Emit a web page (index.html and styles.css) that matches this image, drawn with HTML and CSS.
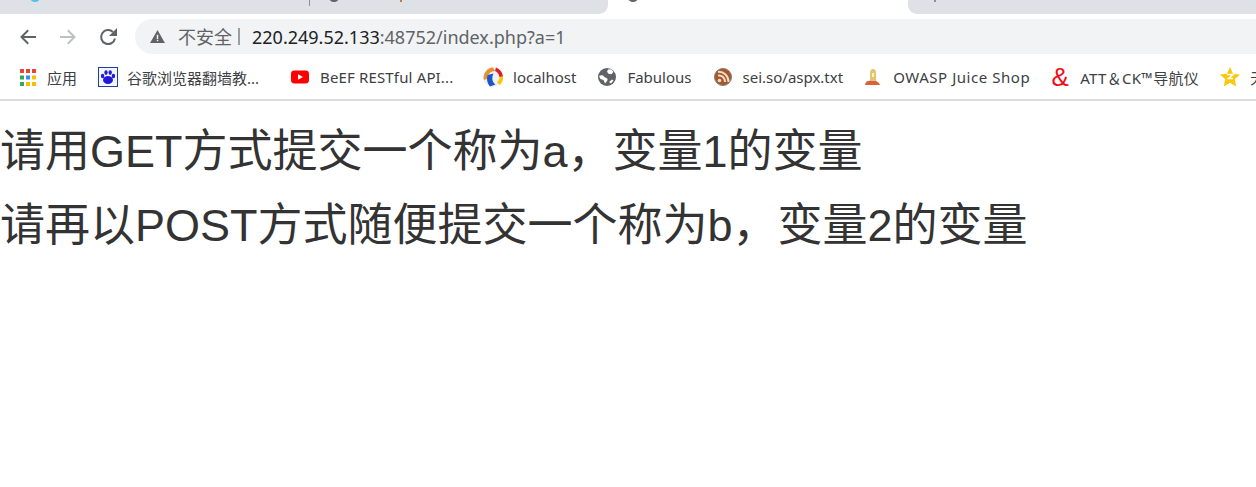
FILE: index.html
```html
<!DOCTYPE html>
<html lang="zh-CN">
<head>
<meta charset="utf-8">
<title>index.php</title>
<link rel="stylesheet" href="styles.css">
</head>
<body>
<header class="chrome">
  <div class="tabstrip">
    <div class="tab tab-before">
      <span class="peek peek-blue peek-a"></span>
      <span class="tab-sep sep-a"></span>
      <span class="peek peek-grey peek-b"></span>
      <span class="peek-bar bar-a"></span>
    </div>
    <div class="tab tab-active"><span class="peek peek-grey peek-c"></span></div>
    <div class="tab tab-after"><span class="peek-bar bar-b"></span></div>
  </div>
  <div class="toolbar">
    <div class="nav-buttons">
      <svg class="nav-icon" viewBox="0 0 18 18"><path d="M17 9H2.500M9.200 2.300 2.500 9l6.700 6.700" fill="none" stroke="#5f6368" stroke-width="2"/></svg>
      <svg class="nav-icon" viewBox="0 0 18 18"><path d="M1 9H15.500M8.800 2.300 15.500 9l-6.700 6.700" fill="none" stroke="#bdc1c6" stroke-width="2"/></svg>
      <svg class="nav-icon" viewBox="0 0 18 18"><path d="M16 10.500A7 7 0 1 1 14 4" fill="none" stroke="#5f6368" stroke-width="2"/><path d="M18 0v8h-8z" fill="#5f6368"/></svg>
    </div>
    <div class="omnibox">
      <svg class="warn" viewBox="0 0 16 14"><path d="M8 0 16 14H0z" fill="#5f6368"/><path d="M7.200 5h1.600v4.600H7.200zM7.200 10.600h1.600v1.600H7.200z" fill="#f1f3f4"/></svg>
      <span class="insecure">不安全</span>
      <span class="divider"></span>
      <span class="url"><span class="host">220.249.52.133</span>:48752/index.php?a=1</span>
    </div>
  </div>
  <nav class="bookmarks">
    <a class="bm"><svg class="bm-icon-apps" viewBox="0 0 16 17"><rect x="0" y="0" width="4" height="4" fill="#ea4335"/><rect x="6" y="0" width="4" height="4" fill="#ea4335"/><rect x="12" y="0" width="4" height="4" fill="#ea4335"/><rect x="0" y="6.500" width="4" height="4" fill="#34a853"/><rect x="6" y="6.500" width="4" height="4" fill="#4285f4"/><rect x="12" y="6.500" width="4" height="4" fill="#fbbc05"/><rect x="0" y="13" width="4" height="4" fill="#34a853"/><rect x="6" y="13" width="4" height="4" fill="#fbbc05"/><rect x="12" y="13" width="4" height="4" fill="#fbbc05"/></svg><span>应用</span></a>
    <a class="bm bm-long bm-baidu"><svg class="bm-icon-wide" viewBox="0 0 20 20"><rect x=".500" y=".500" width="19" height="19" fill="#f4f6ff" stroke="#1c3fae"/><g fill="#2319dc"><ellipse cx="10" cy="13" rx="5" ry="4"/><ellipse cx="4.600" cy="9" rx="1.700" ry="2.300"/><ellipse cx="8" cy="5.600" rx="1.700" ry="2.400"/><ellipse cx="12.200" cy="5.600" rx="1.700" ry="2.400"/><ellipse cx="15.400" cy="9" rx="1.700" ry="2.300"/></g></svg><span>谷歌浏览器翻墙教...</span></a>
    <a class="bm bm-yt"><svg class="bm-icon" viewBox="0 0 18 18"><rect x="0" y="2.500" width="18" height="13" rx="3.400" fill="#f00"/><path d="M7 6.200v5.600L12 9z" fill="#fff"/></svg><span class="track-beef">BeEF RESTful API...</span></a>
    <a class="bm bm-wide bm-pad"><svg class="bm-icon-wide" viewBox="0 0 20 20"><circle cx="10" cy="10" r="10" fill="#eef0f4"/><path d="M13 .500C17 2 19.500 5 20 9.500L16.500 10C16 7 14.500 5 12 4z" fill="#e01b24"/><path d="M16.500 10 20 9.500C20.300 13 19 16 16.500 18L14 15.500C15.600 14.300 16.500 12 16.500 10z" fill="#f6c800"/><path d="M12 4C8 4 4 7.500 3.800 12L1 13C-.5 7.500 3.500 1 10 .500z" fill="#e8912b"/><path d="M4.500 8C3.300 12 4.300 16.500 7 19.500L12.500 17.500C9 15 8.500 10.500 10.500 6.500z" fill="#1a56c4"/></svg><span>localhost</span></a>
    <a class="bm bm-pad"><svg class="bm-icon" viewBox="0 0 18 18"><circle cx="9" cy="9" r="9" fill="#5f6368"/><path d="M1 8c2-1 4-1 5 .500s3 1 3.500 2.500S8 14 7 15.500L5.500 12 2.500 11zM10 1.500l3-.200 2.500 2.500-2 2.500-3-.500-1.500-2z" fill="#fff"/><path d="M11 14l3-2.500 1.500 1-2.500 3z" fill="#fff"/></svg><span>Fabulous</span></a>
    <a class="bm"><svg class="bm-icon" viewBox="0 0 18 18"><circle cx="9" cy="9" r="8.500" fill="#a8562c"/><circle cx="9" cy="9" r="8.500" fill="none" stroke="#7d8078" stroke-width="1"/><path d="M4 7.500c4-.500 7 2.500 7 6.500M4 3.800C10 3.500 14.500 8 14.500 14" fill="none" stroke="#f1dcc8" stroke-width="2"/><circle cx="5.500" cy="12.500" r="1.800" fill="#f1dcc8"/></svg><span>sei.so/aspx.txt</span></a>
    <a class="bm"><svg class="bm-icon" viewBox="0 0 18 18"><path d="M6 5Q6 1 9 1t3 4v8H6z" fill="#e3c56e"/><rect x="8" y="5" width="2" height="4" fill="#fff3c4"/><path d="M1 17q1-5 6-4h5l3 2 1 2z" fill="#d9603a"/></svg><span class="track-owasp">OWASP Juice Shop</span></a>
    <a class="bm"><span class="amp-icon">&amp;</span><span class="track-att">ATT＆CK™导航仪</span></a>
    <a class="bm bm-wide"><svg class="bm-icon-wide" viewBox="0 0 20 20"><path d="M10 0l3 6.700 7 .800-5.200 4.700L16.200 19.500 10 15.800 3.800 19.500 5.200 12.200 0 7.500l7-.800z" fill="#fac80e"/><path d="M7 7.500h6L8.500 11.500H13" fill="none" stroke="#fff" stroke-width="1.500"/></svg><span>无</span></a>
  </nav>
</header>
<main class="page">
  <p class="line">请用GET方式提交一个称为a，变量1的变量</p>
  <p class="line">请再以POST方式随便提交一个称为b，变量2的变量</p>
</main>
</body>
</html>
```

FILE: styles.css
```css
* { box-sizing: border-box; }
html, body { margin: 0; padding: 0; height: 100%; overflow: hidden; background: #fff; }
body { font-family: "Liberation Sans", "Noto Sans CJK SC", sans-serif; color: #333; }

.chrome { border-bottom: 2px solid #dadce0; height: 101px; }

.tabstrip { display: flex; height: 14px; background: #fff; }
.tab { position: relative; height: 14px; overflow: hidden; }
.tab-before { width: 608px; background: #dee1e6; border-bottom-right-radius: 9px; }
.tab-active { width: 300px; background: #fff; }
.tab-after { flex: 1; background: #dee1e6; border-bottom-left-radius: 9px; }
.tab-sep { position: absolute; left: 309px; top: 0; width: 1px; height: 6px; background: #8d9094; }
.peek { position: absolute; top: -7px; width: 10px; height: 9px; border-radius: 50%; }
.peek-blue { background: #4fc3f0; }
.peek-grey { background: #5f6368; }
.peek-a { left: 30px; }
.peek-b { left: 329px; }
.peek-c { left: 20px; }
.peek-bar { position: absolute; top: 0; width: 2px; height: 2px; background: #c07a3a; }
.bar-a { left: 400px; }
.bar-b { left: 26px; background: #8d9094; }

.toolbar { display: flex; align-items: center; height: 45px; }
.nav-buttons { display: flex; align-items: center; gap: 22px; width: 135px; padding-left: 19px; flex-shrink: 0; }
.nav-icon { width: 18px; height: 18px; flex-shrink: 0; }
.omnibox {
  flex: 1; height: 35px; display: flex; align-items: center;
  background: #f1f3f4; border-radius: 18px 0 0 18px; padding-left: 15px;
  font-family: "Noto Sans", "Noto Sans CJK SC", sans-serif;
}
.warn { width: 15px; height: 13px; flex-shrink: 0; }
.insecure { margin-left: 13px; font-size: 18px; line-height: 24px; color: #5f6368; }
.divider { width: 2px; height: 17px; background: #9a9ea3; margin: 0 12px 0 6px; }
.url { font-size: 18px; line-height: 24px; color: #5f6368; white-space: nowrap; }
.host { color: #202124; }

.bookmarks {
  display: flex; align-items: center; height: 36px; padding-left: 20px; gap: 21px;
  font-family: "Noto Sans", "Noto Sans CJK SC", sans-serif; font-size: 15px; color: #3c4043;
  white-space: nowrap; overflow: hidden;
}
.bm { display: flex; align-items: center; gap: 11px; flex-shrink: 0; }
.bm-long { width: 171px; }
.bm-baidu { gap: 9px; }
.bm-yt { width: 172px; padding-left: 1px; }
.bm-wide { gap: 10px; }
.bm-pad { margin-right: 1px; }
.track-beef { letter-spacing: .15px; }
.track-owasp { letter-spacing: .55px; }
.track-att { letter-spacing: .3px; }
.bm-icon { width: 18px; height: 18px; flex-shrink: 0; }
.bm-icon-apps { width: 16px; height: 17px; flex-shrink: 0; }
.bm-icon-wide { width: 20px; height: 20px; flex-shrink: 0; }
.amp-icon { width: 18px; height: 20px; line-height: 20px; font-family: "Liberation Sans", sans-serif; font-weight: 400; font-size: 26px; color: #f00c16; text-align: center; flex-shrink: 0; }

.page { padding-top: 14px; }
.line { margin: 0; font-size: 45px; line-height: 74px; white-space: nowrap; }
```
